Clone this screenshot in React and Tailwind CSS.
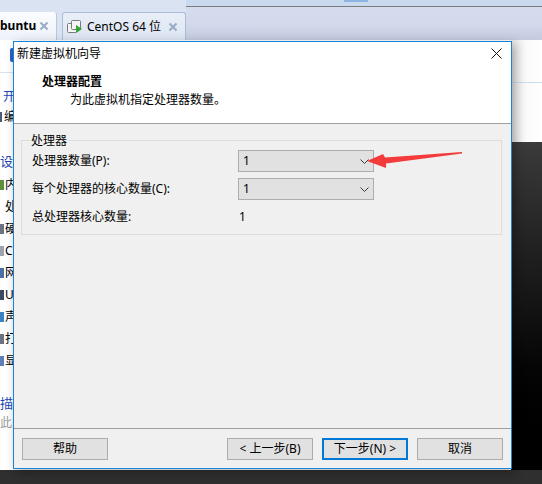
const hardware = [
    { label: '内存', icon: 'bg-[#5b8f3a]' },
    { label: '处理器', icon: 'bg-transparent' },
    { label: '硬盘 (SCSI)', icon: 'bg-[#6b7280]' },
    { label: 'CD/DVD (IDE)', icon: 'bg-[#9ca3af]' },
    { label: '网络适配器', icon: 'bg-[#4b6fa8]' },
    { label: 'USB 控制器', icon: 'bg-[#3b4a63]' },
    { label: '声卡', icon: 'bg-[#3b82c4]' },
    { label: '打印机', icon: 'bg-[#6b7280]' },
    { label: '显示器', icon: 'bg-[#5b7fb8]' },
];

const VmIcon = () => (
    <svg width="16" height="14" viewBox="0 0 16 14">
        <rect x="0.5" y="3.5" width="9" height="9" rx="1" fill="#f4f4f4" stroke="#7a7a7a" />
        <rect x="4.5" y="0.5" width="9" height="9" rx="1" fill="#f4f4f4" stroke="#7a7a7a" />
        <path d="M9 5 L15 9 L9 13 Z" fill="#2fa52f" />
    </svg>
);

const TabClose = ({ color }) => (
    <svg width="10" height="10" viewBox="0 0 10 10">
        <path d="M1.5 1.5 L8.5 8.5 M8.5 1.5 L1.5 8.5" stroke={color} strokeWidth="2" />
    </svg>
);

const Combo = ({ value }) => (
    <div className="w-[136px] h-[22px] bg-[#e1e1e1] border border-[#adadad] flex items-center justify-between pl-[4px] pr-[4px]">
        <span>{value}</span>
        <svg width="9" height="5" viewBox="0 0 9 5">
            <path d="M0.5 0.5 L4.5 4.5 L8.5 0.5" fill="none" stroke="#3a3a3a" strokeWidth="1" />
        </svg>
    </div>
);

const Button = ({ children, primary }) => (
    <button
        className={
            primary
                ? 'w-[86px] h-[22px] bg-[#e1e1e1] border-2 border-[#0078d7] flex items-center justify-center'
                : 'w-[86px] h-[22px] bg-[#e1e1e1] border border-[#adadad] flex items-center justify-center'
        }
    >
        {children}
    </button>
);

export default function App() {
    return (
        <div className="relative w-[542px] h-[484px] overflow-hidden flex flex-col bg-white text-[12px] leading-[16px] text-black font-['Noto_Sans','Noto_Sans_CJK_SC',sans-serif]">
            {/* tab strip */}
            <div className="h-[40px] flex shrink-0">
                <div className="w-[186px] bg-[#d9e3f1] flex items-end gap-[5px] pt-[12px]">
                    <div className="w-[57px] h-[28px] bg-gradient-to-b from-[#fbfcfe] to-[#eef2f9] border-r border-[#b7c7de] rounded-tr-[3px] flex items-center justify-between pr-[7px]">
                        <span className="font-bold text-[12px]">buntu</span>
                        <TabClose color="#9aabc3" />
                    </div>
                    <div className="flex-1 h-[28px] bg-gradient-to-b from-[#e9eff8] to-[#dce5f2] border border-b-0 border-[#a9bdd8] rounded-t-[3px] flex items-center pl-[4px] pr-[7px]">
                        <VmIcon />
                        <span className="ml-[4px] text-[12px]">CentOS 64 位</span>
                        <span className="ml-auto"><TabClose color="#9aabc3" /></span>
                    </div>
                </div>
                <div className="flex-1 flex flex-col">
                    <div className="h-[7px] bg-[#c9d9ee] border-b border-[#7b7b7b] flex">
                        <div className="ml-[158px] w-[24px] h-[2px] bg-[#8fb3e0]" />
                    </div>
                    <div className="flex-1 bg-gradient-to-b from-[#d5dcee] via-[#d3daec] to-[#c4cadf]" />
                </div>
            </div>

            {/* vmware window behind */}
            <div className="flex-1 flex">
                <div className="flex-1 flex flex-col bg-white">
                    <div className="h-[33px] border-b border-[#d9e2ee] flex items-start pt-[8px] pl-[10px]">
                        <div className="w-[8px] h-[14px] rounded-[2px] bg-[#2b63c0]" />
                    </div>
                    <div className="h-[14px]" />
                    <div className="h-[20px] flex items-center pl-[3px] text-[#1f47b0]">开启此虚拟机</div>
                    <div className="h-[20px] flex items-center">
                        <div className="w-[2px] h-[10px] bg-[#4a5a78]" />
                        <span className="ml-[2px]">编辑虚拟机设置</span>
                    </div>
                    <div className="h-[24px]" />
                    <div className="h-[20px] flex items-center text-[#1f47b0] text-[13px]">设备</div>
                    <div className="h-[3px]" />
                    {hardware.map((item) => (
                        <div key={item.label} className="h-[22px] flex items-center">
                            <div className={`w-[4px] h-[10px] ${item.icon}`} />
                            <span className="ml-[1px]">{item.label}</span>
                        </div>
                    ))}
                    <div className="h-[21px]" />
                    <div className="h-[20px] flex items-center text-[#1f47b0] text-[13px]">描述</div>
                    <div className="h-[20px] flex items-center text-[#9a9a9a]">此处键入对该虚拟机的描述。</div>
                </div>
                <div className="w-[31px] flex flex-col">
                    <div className="h-[102px] bg-gradient-to-r from-[#e6e6e6] via-[#fafafa] to-white flex flex-col">
                        <div className="h-[42px]" />
                        <div className="h-px bg-[#c9dcf0]" />
                    </div>
                    <div className="flex-1 bg-gradient-to-b from-[#3b3b3b] via-[#141414] to-black" />
                </div>
            </div>
            <div className="h-[14px] shrink-0 bg-[#2f2f2f]" />

            {/* wizard dialog */}
            <div className="absolute left-[13px] top-[41px] w-[499px] h-[428px] border border-[#1883d7] bg-[#f0f0f0] flex flex-col shadow-[3px_3px_10px_rgba(0,0,0,0.3)]">
                <div className="h-[82px] bg-white border-b border-[#a0a0a0] flex flex-col">
                    <div className="h-[23px] flex items-center justify-between pl-[3px] pr-[9px]">
                        <span>新建虚拟机向导</span>
                        <svg width="11" height="11" viewBox="0 0 11 11">
                            <path d="M0.5 0.5 L10.5 10.5 M10.5 0.5 L0.5 10.5" stroke="#111" strokeWidth="1" />
                        </svg>
                    </div>
                    <div className="h-[8px]" />
                    <div className="h-[18px] flex items-center pl-[28px] font-bold">处理器配置</div>
                    <div className="h-[18px] flex items-center pl-[56px]">为此虚拟机指定处理器数量。</div>
                </div>

                <div className="flex-1 pt-[16px] pl-[7px] pr-[9px]">
                    <div className="relative border border-[#dcdcdc] pt-[9px] pb-[6px] pl-[10px] flex flex-col gap-[6px]">
                        <span className="absolute -top-[8px] left-[8px] px-[1px] bg-[#f0f0f0]">处理器</span>
                        <div className="flex items-center">
                            <span className="w-[206px]">处理器数量(P):</span>
                            <Combo value="1" />
                        </div>
                        <div className="flex items-center">
                            <span className="w-[206px]">每个处理器的核心数量(C):</span>
                            <Combo value="1" />
                        </div>
                        <div className="h-[22px] flex items-center">
                            <span className="w-[206px]">总处理器核心数量:</span>
                            <span className="pl-[1px]">1</span>
                        </div>
                    </div>
                </div>

                <div className="h-[40px] border-t border-[#a0a0a0] flex items-start pt-[9px] pl-[8px] pr-[8px]">
                    <Button>帮助</Button>
                    <div className="ml-auto flex gap-[9px]">
                        <Button>&lt; 上一步(B)</Button>
                        <Button primary>下一步(N) &gt;</Button>
                        <Button>取消</Button>
                    </div>
                </div>
            </div>

            {/* red annotation arrow */}
            <svg className="absolute left-[365px] top-[150px] pointer-events-none" width="98" height="20" viewBox="0 0 98 20">
                <path d="M2 11 L18 4 L20 7.5 L97 2 L97 3.6 L21 13.5 L21 18 Z" fill="#f43b3b" />
            </svg>
        </div>
    );
}
